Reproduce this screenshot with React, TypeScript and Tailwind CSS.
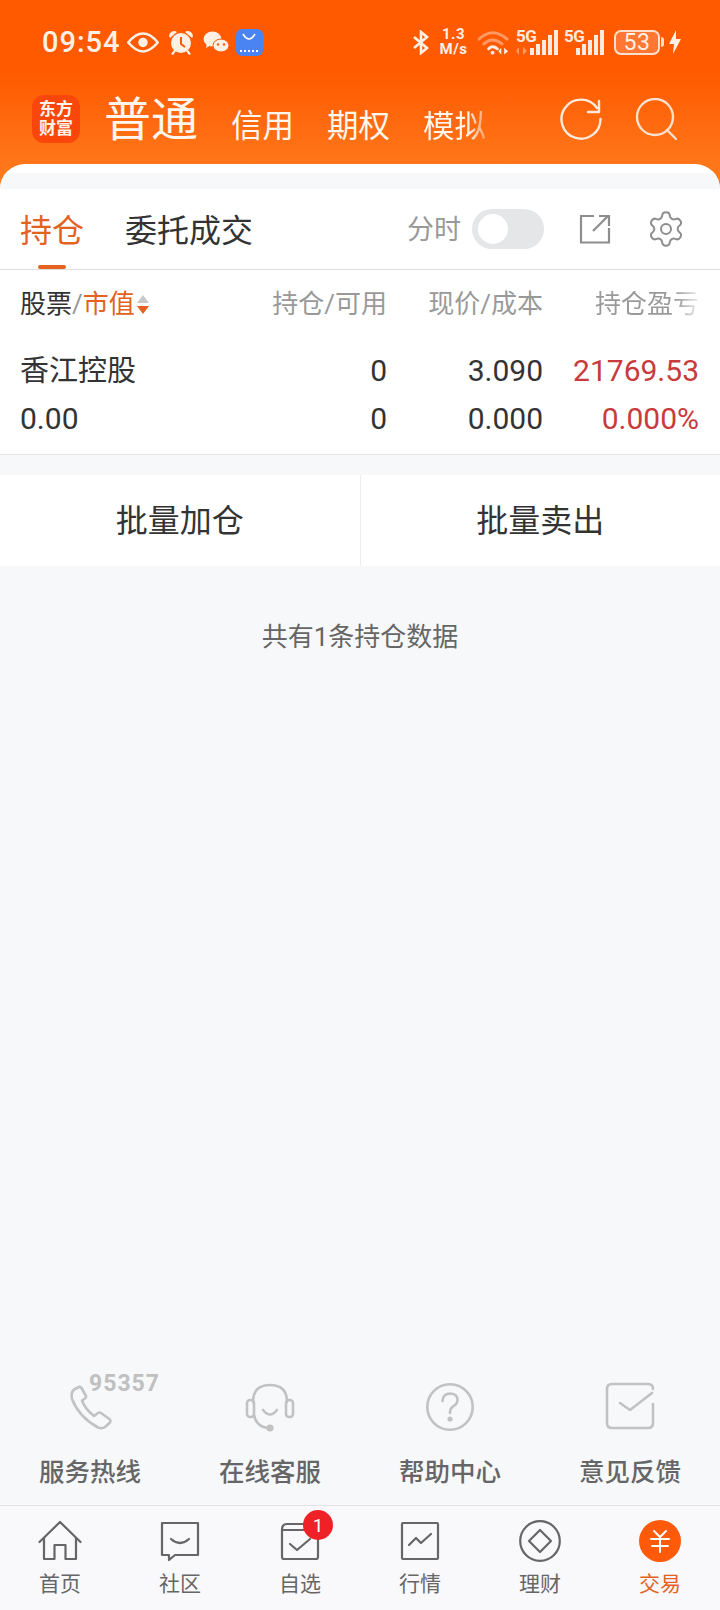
import type { ReactNode } from "react";
import { Settings } from "lucide-react";

const serviceLinks: { label: string; icon: ReactNode }[] = [
  {
    label: "服务热线",
    icon: (
      <div className="relative h-[50px] w-[50px]">
        <svg viewBox="0 0 50 50" className="h-[50px] w-[50px]" fill="none" stroke="#c2c2c2" strokeWidth="2.6" strokeLinejoin="round">
          <path d="M9 7.5 L14 5 Q15.5 4.5 16.5 6 L21 14 Q21.5 15.5 20 16.5 L17 18.5 Q20 27 29 34 L33 31 Q34.5 30 36 31 L45 37.5 Q46 39 45 40.5 L40 45 Q37 47 33 45.5 Q14 35 7 17 Q5.5 11 9 7.5 Z" />
        </svg>
        <span className="absolute top-[-10px] left-[24px] text-[23px] leading-none font-bold tracking-[1px] text-[#c0c0c0]">95357</span>
      </div>
    ),
  },
  {
    label: "在线客服",
    icon: (
      <svg viewBox="0 0 50 50" className="h-[50px] w-[50px]" fill="none" stroke="#c2c2c2" strokeWidth="2.6" strokeLinecap="round">
        <path d="M8 20 Q8 3 25 3 Q42 3 42 20" />
        <rect x="2" y="18" width="7" height="17" rx="3" />
        <rect x="41" y="18" width="7" height="17" rx="3" />
        <path d="M9 33 Q11 44 22 46" />
        <path d="M18 28 Q25 37 32 28" />
        <circle cx="25" cy="46" r="3.6" fill="#c2c2c2" stroke="none" />
      </svg>
    ),
  },
  {
    label: "帮助中心",
    icon: (
      <svg viewBox="0 0 50 50" className="h-[50px] w-[50px]" fill="none" stroke="#c2c2c2" strokeWidth="2.6" strokeLinecap="round">
        <circle cx="25" cy="25" r="22.7" />
        <path d="M17.5 19 Q18 11.5 25.5 11.5 Q32.5 12 32.5 18 Q32.5 22 28 24.5 Q25 26.5 25 31" />
        <circle cx="25" cy="37" r="2.6" fill="#c2c2c2" stroke="none" />
      </svg>
    ),
  },
  {
    label: "意见反馈",
    icon: (
      <svg viewBox="0 0 50 50" className="h-[50px] w-[50px]" fill="none" stroke="#c2c2c2" strokeWidth="2.6" strokeLinecap="round" strokeLinejoin="round">
        <path d="M48 22 V41 Q48 46 43 46 H7 Q2 46 2 41 V7 Q2 2 7 2 H43 Q48 2 48 7" />
        <path d="M15 21 L25 28 L47 11" />
      </svg>
    ),
  },
];

function TabIcon({ name }: { name: string }) {
  if (name === "首页") {
    return (
      <svg viewBox="0 0 44 42" className="h-[42px] w-[44px]" fill="none" stroke="#666" strokeWidth="2.2" strokeLinejoin="round" strokeLinecap="round">
        <path d="M1.5 22 L22 2 L42.5 22" />
        <path d="M6 18 V39 H16.5 V25 H27.5 V39 H38 V18" />
      </svg>
    );
  }
  if (name === "社区") {
    return (
      <svg viewBox="0 0 42 42" className="h-[42px] w-[42px]" fill="none" stroke="#666" strokeWidth="2.2" strokeLinejoin="round" strokeLinecap="round">
        <path d="M3 3 H39 V35 H16 L10 40 V35 H3 Z" />
        <path d="M12 19 Q21 27 30 19" />
      </svg>
    );
  }
  if (name === "自选") {
    return (
      <div className="relative h-[42px] w-[42px]">
        <svg viewBox="0 0 42 42" className="h-[42px] w-[42px]" fill="none" stroke="#666" strokeWidth="2.2" strokeLinejoin="round" strokeLinecap="round">
          <path d="M3 10 Q3 4 8 4 H36 M3 10 H26 M3 10 V37 Q3 39 5 39 H37 Q39 39 39 37 V14" />
          <path d="M11 24 L18 30 L31 19" />
        </svg>
        <span className="absolute top-[-10px] left-[24px] flex h-[30px] w-[30px] items-center justify-center rounded-full bg-[#ee2126] text-[19px] leading-none text-white">1</span>
      </div>
    );
  }
  if (name === "行情") {
    return (
      <svg viewBox="0 0 42 42" className="h-[42px] w-[42px]" fill="none" stroke="#666" strokeWidth="2.2" strokeLinejoin="round" strokeLinecap="round">
        <rect x="3" y="3" width="36" height="36" rx="1" />
        <path d="M10 25 L17 18 L22 23 L32 14" />
      </svg>
    );
  }
  if (name === "理财") {
    return (
      <svg viewBox="0 0 42 42" className="h-[42px] w-[42px]" fill="none" stroke="#666" strokeWidth="2.2" strokeLinejoin="round">
        <circle cx="21" cy="21" r="19.8" />
        <path d="M21 10 L32 21 L21 32 L10 21 Z" />
      </svg>
    );
  }
  return (
    <svg viewBox="0 0 42 42" className="h-[42px] w-[42px]" fill="none" stroke="#fff" strokeWidth="2" strokeLinecap="round">
      <circle cx="21" cy="21" r="21" fill="#ff5a0a" stroke="none" />
      <path d="M15 11 L21 17 L27 11 M12 19 H30 M13 26 H29 M21 17 V32" />
    </svg>
  );
}

function Signal({ width, arrows }: { width: string; arrows?: boolean }) {
  return (
    <div className={`relative h-[25px] ${width}`}>
      <span className="absolute top-[-2px] left-0 text-[17px] leading-none font-bold tracking-[-0.5px] text-[#ffeadd]">5G</span>
      {arrows && (
        <svg viewBox="0 0 14 8" className="absolute bottom-0 left-0 h-[8px] w-[14px]" fill="#ff9a66">
          <path d="M3 0 V8 L0 4 Z M7 0 V8 L11 4 Z" />
        </svg>
      )}
      <div className="absolute right-0 bottom-0 flex items-end gap-[2px]">
        <span className="h-[7px] w-[4px] bg-[#ffeadd]" />
        <span className="h-[11px] w-[4px] bg-[#ffeadd]" />
        <span className="h-[15px] w-[4px] bg-[#ffeadd]" />
        <span className="h-[20px] w-[4px] bg-[#ffeadd]" />
        <span className="h-[25px] w-[4px] bg-[#ffeadd]" />
      </div>
    </div>
  );
}

function StatusBar() {
  return (
    <div className="flex h-[84px] items-center justify-between pr-[39px] pl-[42px] text-[#fff0e6]">
      <div className="flex items-center">
        <span className="text-[29px] leading-none font-medium tracking-[1px]">09:54</span>
        <svg viewBox="0 0 30 20" className="ml-[6px] h-[21px] w-[32px]" fill="none" stroke="#fff0e6" strokeWidth="2.4">
          <path d="M1 10 Q15 -7 29 10 Q15 27 1 10 Z" />
          <circle cx="15" cy="10" r="4.5" fill="#fff0e6" stroke="none" />
        </svg>
        <svg viewBox="0 0 26 25" className="ml-[9px] h-[25px] w-[26px]" fill="#fff0e6">
          <circle cx="13" cy="13" r="10" />
          <path d="M1 6 Q2 1 7 1 L9 2 L2 8 Z M25 6 Q24 1 19 1 L17 2 L24 8 Z M6 20 L3 24 L5 25 L8 21 Z M20 20 L23 24 L21 25 L18 21 Z" />
          <path d="M13 7 V14 L17 17" fill="none" stroke="#ff5a00" strokeWidth="2" />
        </svg>
        <svg viewBox="0 0 26 22" className="ml-[9px] h-[22px] w-[26px]" fill="#fff0e6">
          <ellipse cx="9.5" cy="8" rx="9" ry="7.5" />
          <path d="M4 12 L3 17 L8 14 Z" />
          <ellipse cx="18" cy="14.5" rx="8" ry="6.5" stroke="#ff5a00" strokeWidth="1" />
          <circle cx="15" cy="13.5" r="1.2" fill="#ff5a00" />
          <circle cx="21" cy="13.5" r="1.2" fill="#ff5a00" />
        </svg>
        <div className="ml-[7px] flex h-[27px] w-[27px] flex-col items-center justify-between rounded-[6px] bg-[#4a84f2] pt-[4px] pb-[4px]">
          <svg viewBox="0 0 14 8" className="h-[8px] w-[14px]" fill="none" stroke="#fff" strokeWidth="1.6">
            <path d="M1 1 Q7 11 13 1" />
          </svg>
          <span className="h-[2px] w-[18px] border-t-2 border-dotted border-white" />
        </div>
      </div>
      <div className="flex items-center">
        <svg viewBox="0 0 18 25" className="h-[25px] w-[18px]" fill="none" stroke="#fff0e6" strokeWidth="2.6">
          <path d="M2 7 L15 18 L9 23 V2 L15 7 L2 18" />
        </svg>
        <div className="ml-[8px] flex w-[31px] flex-col items-center text-[15px] font-bold tracking-[0.5px]">
          <span className="block h-[15px] leading-[15px]">1.3</span>
          <span className="block h-[15px] leading-[15px]">M/s</span>
        </div>
        <svg viewBox="0 0 32 25" className="ml-[9px] h-[25px] w-[31px]" fill="none" strokeLinecap="round">
          <path d="M1 9 Q15 -4 30 9" stroke="#ff9a66" strokeWidth="3" />
          <path d="M6 14 Q15 6 25 14" stroke="#ff9a66" strokeWidth="3" />
          <path d="M11 19 Q15 15 20 19" stroke="#fff0e6" strokeWidth="3" />
          <circle cx="15" cy="23" r="2" fill="#fff0e6" />
          <path d="M24 18 V25 L21 21.5 Z M27 18 V25 L31 21.5 Z" fill="#fff0e6" />
        </svg>
        <div className="ml-[7px]">
          <Signal width="w-[42px]" arrows />
        </div>
        <div className="ml-[6px]">
          <Signal width="w-[40px]" />
        </div>
        <div className="ml-[10px] flex h-[25px] w-[46px] items-center justify-center rounded-[7px] border-2 border-[#ffe0cc] bg-[#ff8a55]/60 text-[23px] leading-none tracking-[0.5px]">53</div>
        <span className="ml-[1px] h-[10px] w-[3px] rounded-r-sm bg-[#ffe0cc]" />
        <svg viewBox="0 0 12 24" className="ml-[5px] h-[24px] w-[12px]" fill="#fff0e6">
          <path d="M7 0 L0 14 H5 L4 24 L12 9 H7 Z" />
        </svg>
      </div>
    </div>
  );
}

function NavBar() {
  return (
    <div className="flex h-[80px] items-center pb-[10px] pl-[32px]">
      <div className="flex h-[48px] w-[48px] flex-col items-center justify-center rounded-[12px] bg-[#f9470c] font-['Liberation_Serif','Noto_Sans_CJK_SC',serif] text-[17px] leading-[19px] font-bold text-[#fff3e8]">
        <span>东方</span>
        <span>财富</span>
      </div>
      <span className="ml-[24px] text-[47px] leading-none text-[#fff6ee]">普通</span>
      <span className="mt-[15px] ml-[33px] text-[31.5px] leading-none text-[#fff6ee]">信用</span>
      <span className="mt-[15px] ml-[33px] text-[31.5px] leading-none text-[#fff6ee]">期权</span>
      <span className="mt-[15px] ml-[33px] bg-gradient-to-r from-[#fff6ee] from-70% to-[#ff9a5a] bg-clip-text text-[31.5px] leading-none text-transparent">模拟</span>
      <svg viewBox="0 0 42 42" className="ml-[74px] h-[42px] w-[42px]" fill="none" stroke="#ffeadd" strokeWidth="2.4" strokeLinecap="round" strokeLinejoin="round">
        <path d="M37 10 A19.5 19.5 0 1 0 40.5 21" />
        <path d="M39 3 V14 H28" />
      </svg>
      <svg viewBox="0 0 42 42" className="ml-[33px] h-[42px] w-[42px]" fill="none" stroke="#ffe0cc" strokeWidth="2.4" strokeLinecap="round">
        <circle cx="20" cy="19" r="18" />
        <path d="M32 32 L41 41" />
      </svg>
    </div>
  );
}

function HoldingsHeader() {
  return (
    <div className="flex h-[81px] items-center border-b border-[#dddddd] bg-white pr-[34px] pl-[20px]">
      <div className="relative flex h-full items-center">
        <span className="mt-[3px] text-[32px] leading-none text-[#e2621e]">持仓</span>
        <span className="absolute bottom-0 left-[18px] h-[4px] w-[28px] rounded-full bg-[#e2621e]" />
      </div>
      <span className="mt-[3px] ml-[41px] text-[32px] leading-none text-[#333]">委托成交</span>
      <span className="mt-[3px] ml-auto text-[27px] leading-none text-[#999]">分时</span>
      <div className="ml-[11px] flex h-[40px] w-[72px] items-center rounded-full bg-[#e5e6e8] pl-[6px]">
        <span className="h-[30px] w-[30px] rounded-full bg-white" />
      </div>
      <svg viewBox="0 0 32 30" className="ml-[35px] h-[30px] w-[32px]" fill="none" stroke="#8e8e8e" strokeWidth="2.2">
        <path d="M15 2 H2 V28.5 H30 V14" />
        <path d="M14 17 L29 2 M20 2 H30 V12" />
      </svg>
      <Settings className="ml-[35px] h-[40px] w-[40px] text-[#8e8e8e]" strokeWidth={1.2} />
    </div>
  );
}

function HoldingsTable() {
  return (
    <div className="border-b border-[#e6e6e6] bg-white pr-[21px] pl-[20px]">
      <div className="flex h-[68px] items-center text-[26px] leading-none text-[#999]">
        <div className="flex w-[241px] items-center">
          <span className="text-[#333]">股票</span>
          <span>/</span>
          <span className="text-[#e2621e]">市值</span>
          <div className="ml-[2px] flex flex-col gap-[3px]">
            <span className="h-0 w-0 border-x-[6px] border-b-[8px] border-x-transparent border-b-[#c8c8c8]" />
            <span className="h-0 w-0 border-x-[6px] border-t-[8px] border-x-transparent border-t-[#e2621e]" />
          </div>
        </div>
        <span className="w-[126px] text-right">持仓/可用</span>
        <span className="w-[156px] text-right">现价/成本</span>
        <span className="w-[156px] bg-gradient-to-r from-[#999] from-85% to-[#eeeeee] bg-clip-text text-right text-transparent">持仓盈亏</span>
      </div>
      <div className="mt-[9px] flex h-[48px] items-center text-[30px] leading-none text-[#333]">
        <span className="w-[241px] text-[29px]">香江控股</span>
        <span className="w-[126px] text-right">0</span>
        <span className="w-[156px] text-right">3.090</span>
        <span className="w-[156px] text-right text-[#c93a3a]">21769.53</span>
      </div>
      <div className="flex h-[48px] items-center text-[30px] leading-none text-[#333]">
        <span className="w-[241px]">0.00</span>
        <span className="w-[126px] text-right">0</span>
        <span className="w-[156px] text-right">0.000</span>
        <span className="w-[156px] text-right text-[#c93a3a]">0.000%</span>
      </div>
      <div className="h-[11px]" />
    </div>
  );
}

export default function App() {
  const tabs = ["首页", "社区", "自选", "行情", "理财", "交易"];

  return (
    <div className="flex h-[1610px] w-[720px] flex-col overflow-hidden bg-[#f7f8fa] font-['Roboto','Noto_Sans_CJK_SC',sans-serif]">
      <div className="bg-gradient-to-b from-[#ff5a00] from-40% to-[#ff7d1e]">
        <StatusBar />
        <NavBar />
        <div className="h-[25px] overflow-hidden rounded-t-[28px] bg-white pt-[9px]">
          <div className="h-[16px] bg-[#f7f8fa]" />
        </div>
      </div>

      <HoldingsHeader />
      <HoldingsTable />

      <div className="mt-[20px] flex h-[91px] bg-white text-[32px] leading-none text-[#333]">
        <button className="flex-1 border-r border-[#eeeeee]">批量加仓</button>
        <button className="flex-1">批量卖出</button>
      </div>

      <p className="mt-[58px] text-center text-[26px] leading-none text-[#666]">共有1条持仓数据</p>

      <div className="flex-1" />

      <div className="grid h-[123px] grid-cols-4">
        {serviceLinks.map((link) => (
          <div key={link.label} className="flex flex-col items-center">
            {link.icon}
            <span className="mt-[28px] text-[25.5px] leading-none font-medium text-[#666]">{link.label}</span>
          </div>
        ))}
      </div>

      <div className="grid h-[105px] grid-cols-6 border-t border-[#e3e3e5] bg-[#f9f9fb] pt-[14px]">
        {tabs.map((tab) => (
          <div key={tab} className="flex flex-col items-center">
            <TabIcon name={tab} />
            <span className={`mt-[12px] text-[21px] leading-none ${tab === "交易" ? "text-[#e2621e]" : "text-[#666]"}`}>{tab}</span>
          </div>
        ))}
      </div>
    </div>
  );
}
